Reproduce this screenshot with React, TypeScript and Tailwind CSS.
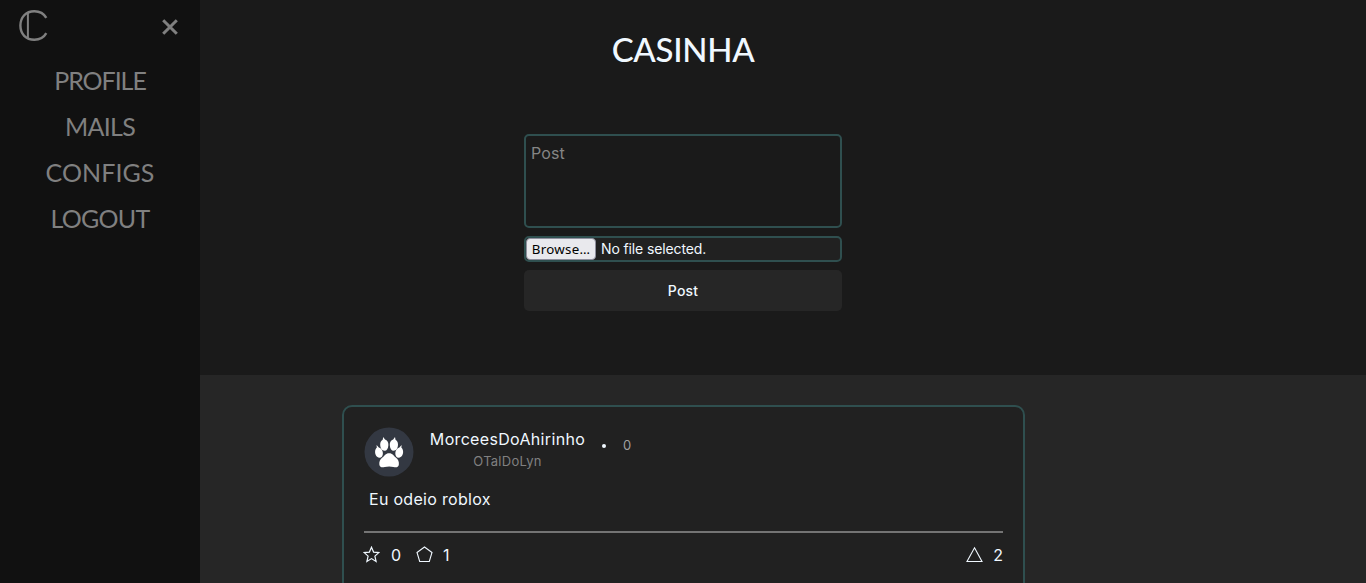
const links = [
  { label: 'PROFILE', tracking: 'tracking-[-1.05px]' },
  { label: 'MAILS', tracking: 'tracking-[-0.7px]' },
  { label: 'CONFIGS', tracking: 'tracking-[0.05px]' },
  { label: 'LOGOUT', tracking: 'tracking-[-0.7px]' },
];

function Sidebar() {
  return (
    <aside className="h-full w-[200px] shrink-0 bg-[#111111] text-[#808080]">
      <div className="flex h-[57px] items-start justify-between pl-[18px] pr-[21px] pt-[9px]">
        <svg width="31" height="34" viewBox="0 0 31 34" fill="none" stroke="currentColor" strokeWidth="2.4">
          <path d="M28.3 8.9C25.8 4.4 21.6 2.2 16.4 2.2C7.8 2.2 2.4 8.2 2.4 16.6C2.4 25 7.8 30.7 16.4 30.7C21.6 30.7 25.8 28.6 28.3 24.2" />
          <path d="M9.9 4V29" strokeWidth="2" />
        </svg>
        <svg className="mt-[9px]" width="18" height="18" viewBox="0 0 18 18" fill="none" stroke="currentColor" strokeWidth="3">
          <path d="M2.2 2.2L15.8 15.8M15.8 2.2L2.2 15.8" />
        </svg>
      </div>
      <nav className="flex flex-col items-center">
        {links.map((l) => (
          <a key={l.label} className={`flex h-[46px] items-center text-[25px] leading-none ${l.tracking}`}>
            {l.label}
          </a>
        ))}
      </nav>
    </aside>
  );
}

function PostForm() {
  return (
    <form className="flex w-[318px] flex-col gap-2 font-[Inter,sans-serif]">
      <div className="h-[94px] rounded-[5px] border-2 border-[#2f4f4f] px-[5px] pt-[6px] text-base leading-[23px] tracking-[0.1px] text-[#858585]">
        Post
      </div>
      <div className="flex h-[26px] items-center rounded-[5px] border-2 border-[#2f4f4f] bg-[#212121] text-[14px] text-[#f0f8ff]">
        <span className="flex h-[22px] w-[70px] items-center justify-center rounded-[4px] border border-[#8f8f9d] bg-[#e9e9ed] pt-[2px] font-['Noto_Sans',sans-serif] text-[13.3px] tracking-[0.3px] text-black">
          Browse…
        </span>
        <span className="ml-[5px] pb-[2px] tracking-[-0.12px]">No file selected.</span>
      </div>
      <button type="button" className="h-[41px] rounded-[5px] bg-[#262626] text-[14px] font-medium tracking-[0.15px] text-[#f0f8ff]">
        Post
      </button>
    </form>
  );
}

function Avatar() {
  return (
    <svg width="50" height="50" viewBox="0 0 50 50">
      <circle cx="25" cy="25" r="24.5" fill="#333842" />
      <g fill="#fff">
        <path d="M19.2 10L21 12.6C23.3 13.3 24.5 15.5 24.4 18C24.2 21.6 22.8 23.8 20.6 23.8C17.9 23.8 16.2 21 16.2 17.6C16.2 15.2 17.3 13.4 18.7 12.8Z" />
        <path d="M31 10L31.5 12.8C32.9 13.4 34 15.2 34 17.6C34 21 32.3 23.8 29.6 23.8C27.4 23.8 26 21.6 25.8 18C25.7 15.5 26.9 13.3 29.2 12.6Z" />
        <path d="M12.6 18L14.8 20.4C17.2 21 18.8 23.3 18.9 26C19 29 17.4 31 15.3 30.8C12.7 30.5 10.9 27.7 11.1 24.6C11.2 22.6 11.9 21.4 12.8 20.7Z" />
        <path d="M37.6 18L37.4 20.7C38.3 21.4 39 22.6 39.1 24.6C39.3 27.7 37.5 30.5 34.9 30.8C32.8 31 31.2 29 31.3 26C31.4 23.3 33 21 35.4 20.4Z" />
        <path d="M25.1 26.2C28.7 26.2 29.8 28.8 31.8 30.6C34.2 32.7 35.3 35 34.8 38C34.2 40.7 31.7 40.6 29.5 40C26.5 39.3 23.8 39.3 20.8 40C18.5 40.6 16 40.7 15.4 38C14.9 35 16 32.7 18.4 30.6C20.5 28.8 21.5 26.2 25.1 26.2Z" />
      </g>
    </svg>
  );
}

function PostCard() {
  return (
    <article className="h-[200px] w-[683px] rounded-[10px] border-2 border-[#2f4f4f] bg-[#212121] px-5 pt-5 font-[Inter,sans-serif] text-[#f0f8ff]">
      <header className="flex h-[50px] items-start">
        <Avatar />
        <div className="ml-[15px] flex w-[157px] flex-col items-center">
          <span className="h-6 text-base leading-6 tracking-[0.33px]">MorceesDoAhirinho</span>
          <span className="h-5 text-[13px] leading-5 tracking-[0.25px] text-[#808080]">OTalDoLyn</span>
        </div>
        <span className="ml-4 mt-[17px] size-1 rounded-full bg-[#f0f8ff]" />
        <span className="ml-[17px] mt-2 text-[13px] leading-5 text-[#a0a0a0]">0</span>
      </header>
      <p className="ml-[5px] mt-[10px] h-6 text-base leading-6 tracking-[0.3px]">Eu odeio roblox</p>
      <div className="mt-5 h-[2px] w-[639px] bg-[#747474]" />
      <footer className="flex h-[43px] w-[639px] items-center text-base leading-6">
        <svg className="-ml-px" width="17" height="17" viewBox="0 0 17 17" fill="none" stroke="currentColor" strokeWidth="1.2">
          <path d="M8.5 1.2L10.6 6.1L15.8 6.6L11.9 10.1L13.1 15.4L8.5 12.6L3.9 15.4L5.1 10.1L1.2 6.6L6.4 6.1Z" />
        </svg>
        <span className="ml-[11px] w-[10px]">0</span>
        <svg className="ml-[15px]" width="17" height="17" viewBox="0 0 17 17" fill="none" stroke="currentColor" strokeWidth="1.1">
          <path d="M8.5 1L16 6.5L13.3 15.5H3.7L1 6.5Z" />
        </svg>
        <span className="ml-[10px]">1</span>
        <svg className="ml-auto" width="17" height="17" viewBox="0 0 17 17" fill="none" stroke="currentColor" strokeWidth="1.1">
          <path d="M8.5 1.8L16 15.5H1Z" />
        </svg>
        <span className="ml-[10px]">2</span>
      </footer>
    </article>
  );
}

export default function App() {
  return (
    <div className="flex h-[583px] w-full overflow-hidden bg-[#1a1a1a] font-[Lato,sans-serif]">
      <Sidebar />
      <main className="flex min-w-0 flex-1 flex-col">
        <section className="flex h-[375px] shrink-0 flex-col items-center pr-[200px]">
          <h1 className="mt-6 h-[51px] text-[33px] font-medium leading-[50px] tracking-[-0.3px] text-[#f0f8ff]">CASINHA</h1>
          <div className="mt-[59px]">
            <PostForm />
          </div>
        </section>
        <section className="flex flex-1 justify-center bg-[#262626] pr-[199px] pt-[30px]">
          <PostCard />
        </section>
      </main>
    </div>
  );
}
